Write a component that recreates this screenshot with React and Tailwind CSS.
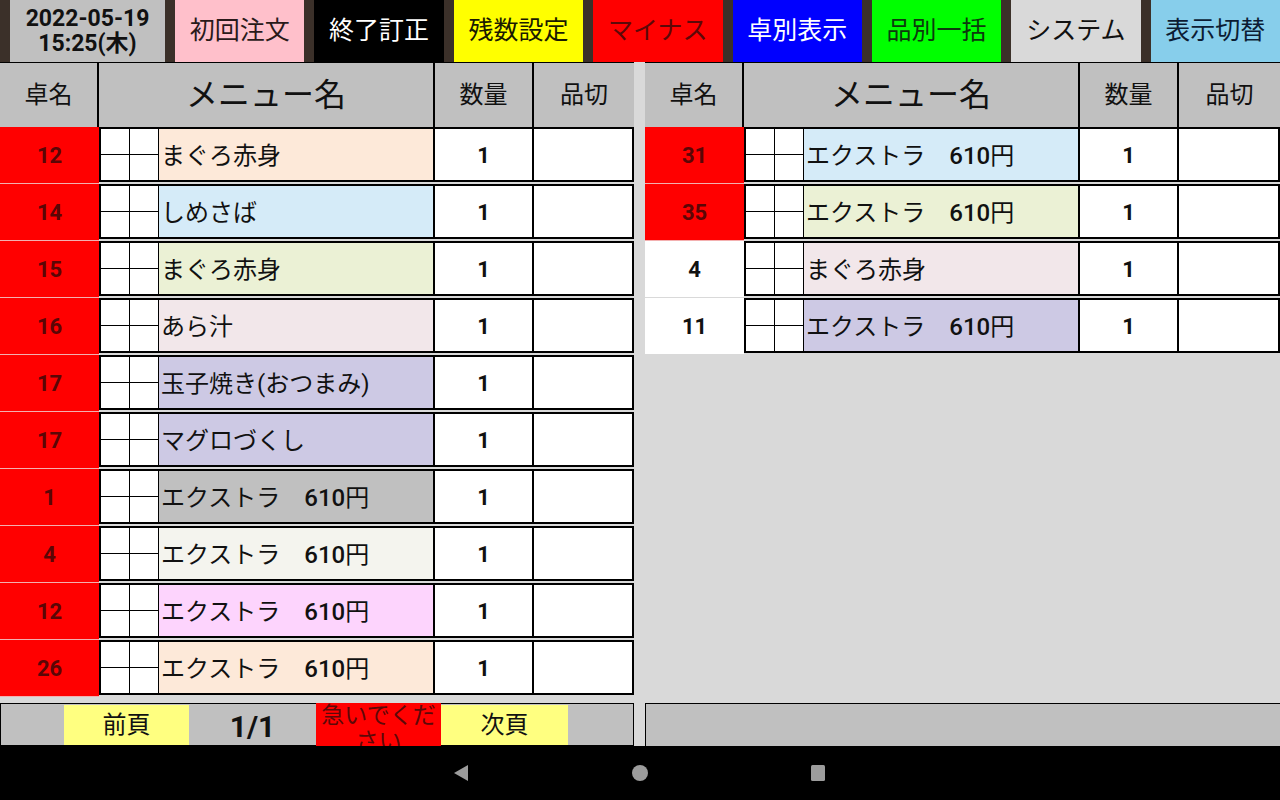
import React from "react";

const FONT = { fontFamily: '"Roboto", "Noto Sans CJK JP", sans-serif' };

const buttons = [
  { label: "初回注文", cls: "bg-[#ffc0cb] text-[#2a1a1a]" },
  { label: "終了訂正", cls: "bg-black text-white" },
  { label: "残数設定", cls: "bg-[#ffff00] text-[#1a1a00]" },
  { label: "マイナス", cls: "bg-[#ff0000] text-[#5c0808]" },
  { label: "卓別表示", cls: "bg-[#0000ff] text-white" },
  { label: "品別一括", cls: "bg-[#00ff00] text-[#0d3a0d]" },
  { label: "システム", cls: "bg-[#d9d9d9] text-[#111]" },
  { label: "表示切替", cls: "bg-[#87ceeb] text-[#0c1c33]" },
];

const EX = "extra";

const leftRows = [
  { no: "12", red: true, name: "まぐろ赤身", bg: "bg-[#fde9d9]" },
  { no: "14", red: true, name: "しめさば", bg: "bg-[#d5ebf8]" },
  { no: "15", red: true, name: "まぐろ赤身", bg: "bg-[#ebf1d5]" },
  { no: "16", red: true, name: "あら汁", bg: "bg-[#f2e7ea]" },
  { no: "17", red: true, name: "玉子焼き(おつまみ)", bg: "bg-[#cdc9e4]" },
  { no: "17", red: true, name: "マグロづくし", bg: "bg-[#cdc9e4]" },
  { no: "1", red: true, name: EX, bg: "bg-[#c0c0c0]" },
  { no: "4", red: true, name: EX, bg: "bg-[#f4f4ee]" },
  { no: "12", red: true, name: EX, bg: "bg-[#fdd4fd]" },
  { no: "26", red: true, name: EX, bg: "bg-[#fde9d9]" },
];

const rightRows = [
  { no: "31", red: true, name: EX, bg: "bg-[#d5ebf8]" },
  { no: "35", red: true, name: EX, bg: "bg-[#ebf1d5]" },
  { no: "4", red: false, name: "まぐろ赤身", bg: "bg-[#f2e7ea]" },
  { no: "11", red: false, name: EX, bg: "bg-[#cdc9e4]" },
];

function MenuName({ name }) {
  if (name === EX) {
    return (
      <span>
        エクストラ　<span className="font-medium">610</span>円
      </span>
    );
  }
  return <span>{name}</span>;
}

function SmallBox() {
  return (
    <div className="flex flex-col w-[29px] h-full border-r border-black bg-white">
      <div className="flex-1 border-b border-black" />
      <div className="flex-1" />
    </div>
  );
}

function Row({ row }) {
  return (
    <div className="flex h-[57px]">
      <div
        className={`w-[99px] h-full flex items-center justify-center text-[22px] font-bold border-b ${
          row.red
            ? "bg-[#ff0000] text-[#5a0606] border-[#f3b0b0]"
            : "bg-white text-[#111] border-[#d9d9d9]"
        }`}
      >
        {row.no}
      </div>
      <div className="flex flex-1 h-[55px] border-2 border-black">
        <SmallBox />
        <SmallBox />
        <div
          className={`w-[276px] flex items-center pl-[2px] pt-[2px] text-[24px] text-[#111] whitespace-nowrap overflow-hidden border-r-2 border-black ${row.bg}`}
        >
          <MenuName name={row.name} />
        </div>
        <div className="w-[99px] flex items-center justify-center pt-[2px] bg-white text-[22px] font-bold text-[#111] border-r-2 border-black">
          1
        </div>
        <div className="flex-1 bg-white" />
      </div>
    </div>
  );
}

function Header() {
  return (
    <div className="flex h-[65px] bg-[#c0c0c0] border-t border-black text-[#111]">
      <div className="w-[99px] flex items-center justify-center text-[24px] border-r-2 border-black">
        卓名
      </div>
      <div className="w-[336px] flex items-center justify-center text-[32px] border-r-2 border-black">
        メニュー名
      </div>
      <div className="w-[99px] flex items-center justify-center text-[24px] border-r-2 border-black">
        数量
      </div>
      <div className="flex-1 flex items-center justify-center text-[24px]">品切</div>
    </div>
  );
}

export default function App() {
  return (
    <div className="w-[1280px] h-[800px] flex flex-col overflow-hidden bg-[#d9d9d9]" style={FONT}>
      {/* top bar */}
      <div className="flex h-[62px] gap-[10px] pl-[10px] bg-[#3b3029]">
        <div className="w-[155px] flex flex-col items-center justify-center bg-[#c0c0c0] text-[#111] text-[23px] font-bold leading-[25px]">
          <span>2022-05-19</span>
          <span>15:25(木)</span>
        </div>
        {buttons.map((b) => (
          <div
            key={b.label}
            className={`flex-1 flex items-center justify-center text-[25px] ${b.cls}`}
          >
            {b.label}
          </div>
        ))}
      </div>

      {/* tables */}
      <div className="flex flex-1 gap-[11px]">
        <div className="w-[634px] flex flex-col">
          <Header />
          {leftRows.map((r, i) => (
            <Row key={i} row={r} />
          ))}
          <div className="flex-1" />
          <div className="h-[43px] flex bg-[#c0c0c0] border border-black pl-[63px] text-[24px] text-[#111]">
            <div className="w-[125px] mt-[1px] bg-[#ffff80] flex items-center justify-center">前頁</div>
            <div className="w-[127px] flex items-center justify-center text-[30px] font-bold pt-[4px]">1/1</div>
            <div className="w-[125px] -my-[1px] bg-[#ff0000] text-[#5c0808] text-[23px] leading-[26px] text-center overflow-hidden">
              急いでください
            </div>
            <div className="w-[127px] mt-[1px] bg-[#ffff80] flex items-center justify-center">次頁</div>
          </div>
        </div>
        <div className="flex-1 flex flex-col">
          <Header />
          {rightRows.map((r, i) => (
            <Row key={i} row={r} />
          ))}
          <div className="flex-1" />
          <div className="h-[43px] bg-[#c0c0c0] border-t border-l border-black" />
        </div>
      </div>

      {/* android nav */}
      <div className="h-[54px] bg-black flex items-center">
        <svg width="1280" height="54" viewBox="0 0 1280 54">
          <polygon points="468,19 468,35 454,27" fill="#9c9c9c" />
          <circle cx="640" cy="27" r="8" fill="#9c9c9c" />
          <rect x="811" y="19" width="14" height="16" rx="1.5" fill="#9c9c9c" />
        </svg>
      </div>
    </div>
  );
}
